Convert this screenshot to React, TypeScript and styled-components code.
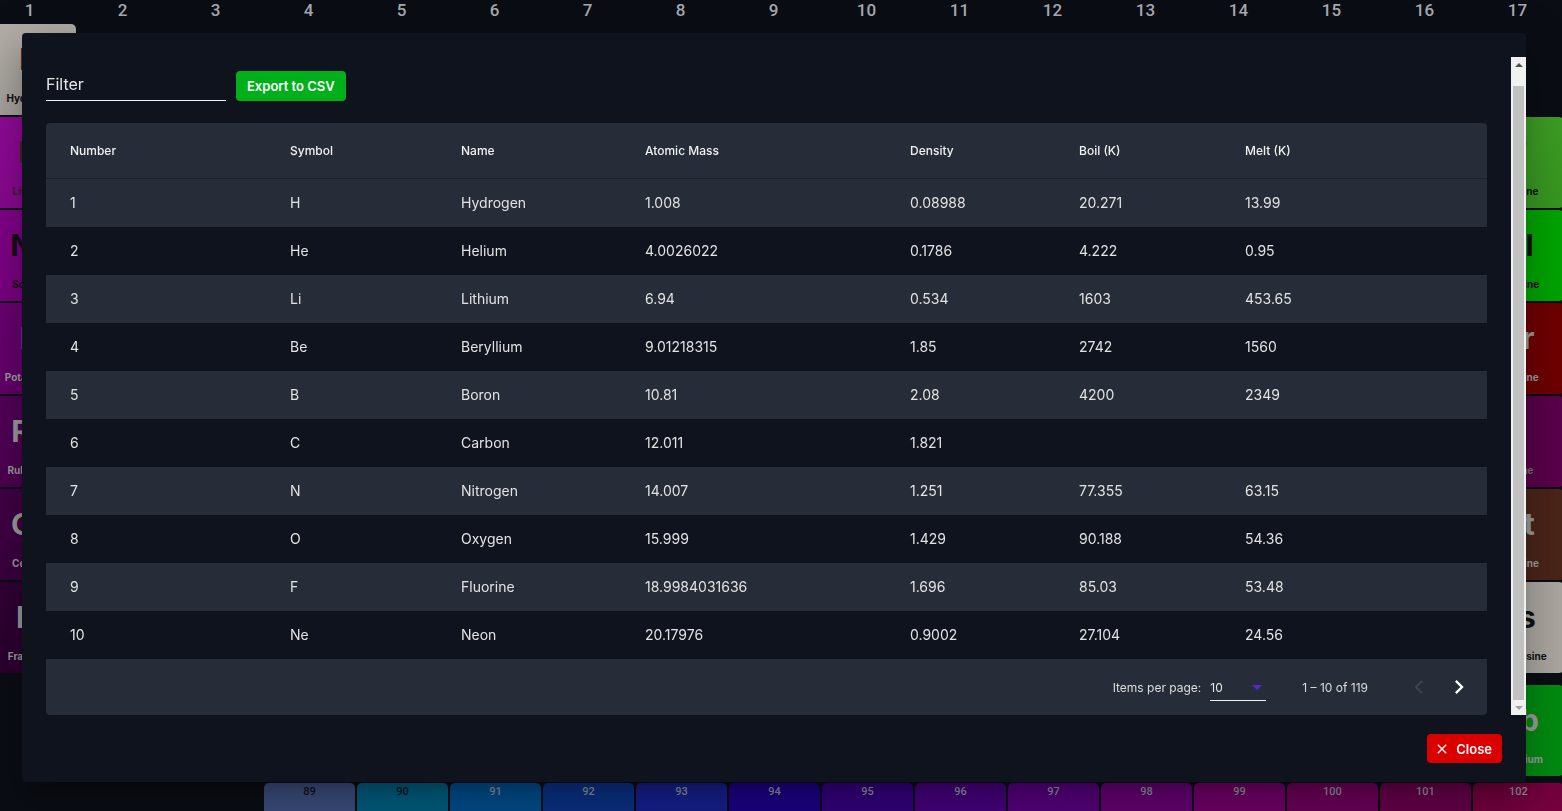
import React, { useLayoutEffect, useRef } from "react";
import styled, { createGlobalStyle } from "styled-components";

const GlobalStyle = createGlobalStyle`
  html, body {
    margin: 0;
    padding: 0;
    background: #0a0d14;
    overflow: hidden;
  }
  body {
    font-family: Inter, "Open Sans", "Noto Sans", sans-serif;
  }
  * { box-sizing: border-box; }
`;

type Element = {
  n: number;
  s: string;
  name: string;
  col: number;
  row: number;
  bg: string;
  fg: string;
};

const elements: Element[] = [
  { n: 1, s: "H", name: "Hydrogen", col: 1, row: 2, bg: "linear-gradient(160deg,#b3aea8,#a29d97)", fg: "#111" },
  { n: 3, s: "Li", name: "Lithium", col: 1, row: 3, bg: "linear-gradient(160deg,#900a98,#85078d)", fg: "#2a2a2a" },
  { n: 11, s: "Na", name: "Sodium", col: 1, row: 4, bg: "linear-gradient(160deg,#82008a,#76007e)", fg: "#111" },
  { n: 19, s: "K", name: "Potassium", col: 1, row: 5, bg: "linear-gradient(160deg,#6b0072,#5f0066)", fg: "#9a9a9a" },
  { n: 37, s: "Rb", name: "Rubidium", col: 1, row: 6, bg: "linear-gradient(160deg,#540059,#4a004f)", fg: "#9a9a9a" },
  { n: 55, s: "Cs", name: "Cesium", col: 1, row: 7, bg: "linear-gradient(160deg,#420046,#38003c)", fg: "#9a9a9a" },
  { n: 87, s: "Fr", name: "Francium", col: 1, row: 8, bg: "linear-gradient(160deg,#310035,#28002c)", fg: "#9a9a9a" },
  { n: 9, s: "F", name: "Fluorine", col: 17, row: 3, bg: "linear-gradient(160deg,#3f9e28,#36961f)", fg: "#111" },
  { n: 17, s: "Cl", name: "Chlorine", col: 17, row: 4, bg: "#00a300", fg: "#111" },
  { n: 35, s: "Br", name: "Bromine", col: 17, row: 5, bg: "#6e0000", fg: "#9a9a9a" },
  { n: 53, s: "I", name: "Iodine", col: 17, row: 6, bg: "#5a004a", fg: "#7a6a78" },
  { n: 85, s: "At", name: "Astatine", col: 17, row: 7, bg: "#4a2418", fg: "#9a9a9a" },
  { n: 117, s: "Ts", name: "Tennessine", col: 17, row: 8, bg: "#aaa59f", fg: "#111" },
  { n: 70, s: "Yb", name: "Ytterbium", col: 17, row: 10, bg: "#008a12", fg: "#9a9a9a" },
  { n: 89, s: "Ac", name: "Actinium", col: 4, row: 12, bg: "#3b4c7b", fg: "#111" },
  { n: 90, s: "Th", name: "Thorium", col: 5, row: 12, bg: "#005b7d", fg: "#111" },
  { n: 91, s: "Pa", name: "Protactinium", col: 6, row: 12, bg: "#004b89", fg: "#8a909a" },
  { n: 92, s: "U", name: "Uranium", col: 7, row: 12, bg: "#0a3082", fg: "#8a909a" },
  { n: 93, s: "Np", name: "Neptunium", col: 8, row: 12, bg: "#151f89", fg: "#8a909a" },
  { n: 94, s: "Pu", name: "Plutonium", col: 9, row: 12, bg: "#1b0082", fg: "#8a909a" },
  { n: 95, s: "Am", name: "Americium", col: 10, row: 12, bg: "#32007a", fg: "#8a909a" },
  { n: 96, s: "Cm", name: "Curium", col: 11, row: 12, bg: "#44007a", fg: "#8a909a" },
  { n: 97, s: "Bk", name: "Berkelium", col: 12, row: 12, bg: "#54007a", fg: "#8a909a" },
  { n: 98, s: "Cf", name: "Californium", col: 13, row: 12, bg: "#630070", fg: "#8a909a" },
  { n: 99, s: "Es", name: "Einsteinium", col: 14, row: 12, bg: "#6e0066", fg: "#8a909a" },
  { n: 100, s: "Fm", name: "Fermium", col: 15, row: 12, bg: "#6a0058", fg: "#8a909a" },
  { n: 101, s: "Md", name: "Mendelevium", col: 16, row: 12, bg: "#640048", fg: "#8a909a" },
  { n: 102, s: "No", name: "Nobelium", col: 17, row: 12, bg: "linear-gradient(160deg,#6e003a,#800044)", fg: "#8a909a" },
];

const rows = [
  ["1", "H", "Hydrogen", "1.008", "0.08988", "20.271", "13.99"],
  ["2", "He", "Helium", "4.0026022", "0.1786", "4.222", "0.95"],
  ["3", "Li", "Lithium", "6.94", "0.534", "1603", "453.65"],
  ["4", "Be", "Beryllium", "9.01218315", "1.85", "2742", "1560"],
  ["5", "B", "Boron", "10.81", "2.08", "4200", "2349"],
  ["6", "C", "Carbon", "12.011", "1.821", "", ""],
  ["7", "N", "Nitrogen", "14.007", "1.251", "77.355", "63.15"],
  ["8", "O", "Oxygen", "15.999", "1.429", "90.188", "54.36"],
  ["9", "F", "Fluorine", "18.9984031636", "1.696", "85.03", "53.48"],
  ["10", "Ne", "Neon", "20.17976", "0.9002", "27.104", "24.56"],
];

const headers = ["Number", "Symbol", "Name", "Atomic Mass", "Density", "Boil (K)", "Melt (K)"];

/* ---------- background periodic table ---------- */

const Table = styled.div`
  display: grid;
  grid-template-columns: repeat(18, 91px);
  grid-template-rows: 22px repeat(7, 91px) 8px 91px 3px 91px;
  gap: 2px;
  margin-left: -15px;
  width: 1672px;
`;

const GroupLabel = styled.div<{ $col: number }>`
  grid-row: 1;
  grid-column: ${(p) => p.$col};
  display: flex;
  align-items: center;
  justify-content: center;
  padding: 0 2px 2px 0;
  font-family: Roboto, "DejaVu Sans", sans-serif;
  font-weight: 500;
  font-size: 17px;
  color: #a7aab1;
`;

const ElementCell = styled.div<{ $col: number; $row: number; $bg: string; $fg: string }>`
  grid-column: ${(p) => p.$col};
  grid-row: ${(p) => p.$row};
  background: ${(p) => p.$bg};
  color: ${(p) => p.$fg};
  border-radius: 5px;
  display: flex;
  flex-direction: column;
  align-items: center;
  padding: 2px 2px 10px;
  overflow: hidden;
  white-space: nowrap;
`;

const ElementNumber = styled.span`
  font-family: Roboto, "DejaVu Sans", sans-serif;
  font-size: 11px;
  font-weight: 500;
  line-height: 14px;
`;

const ElementSymbol = styled.span`
  flex: 1;
  display: flex;
  align-items: center;
  font-size: 30px;
  font-weight: 700;
`;

const ElementName = styled.span`
  font-size: 10px;
  font-weight: 700;
  line-height: 14px;
`;

/* ---------- dialog ---------- */

const Overlay = styled.div`
  position: fixed;
  inset: 0;
  z-index: 10;
  display: flex;
  align-items: flex-start;
  padding: 33px 0 0 22px;
`;

const Dialog = styled.div`
  width: 1504px;
  height: 749px;
  background: #0e131d;
  border-radius: 4px;
  box-shadow: 0 11px 15px -7px rgba(0, 0, 0, 0.2), 0 24px 38px 3px rgba(0, 0, 0, 0.14),
    0 9px 46px 8px rgba(0, 0, 0, 0.12);
  display: flex;
  flex-direction: column;
  padding: 24px 0 19px;
`;

const DialogBody = styled.div`
  height: 658px;
  display: flex;
`;

const ScrollArea = styled.div`
  flex: 1;
  min-width: 0;
  overflow: hidden;
  padding: 0 24px;
`;

const Scrollbar = styled.div`
  width: 15px;
  background: #f1f1f1;
  display: flex;
  flex-direction: column;
`;

const ScrollArrow = styled.div<{ $dir: "up" | "down"; $active: boolean }>`
  height: 15px;
  display: flex;
  align-items: center;
  justify-content: center;
  &::before {
    content: "";
    width: 0;
    height: 0;
    border-left: 4px solid transparent;
    border-right: 4px solid transparent;
    ${(p) =>
      p.$dir === "up"
        ? `border-bottom: 4px solid ${p.$active ? "#505050" : "#a3a3a3"};`
        : `border-top: 4px solid ${p.$active ? "#505050" : "#a3a3a3"};`}
  }
`;

const ScrollTrack = styled.div`
  flex: 1;
  display: flex;
  flex-direction: column;
  justify-content: flex-end;
  padding: 0 2px;
`;

const ScrollThumb = styled.div`
  height: 614px;
  background: #c1c1c1;
`;

const Toolbar = styled.div`
  height: 59px;
  display: flex;
  align-items: flex-end;
  gap: 10px;
  margin-bottom: 22px;
`;

const FilterInput = styled.input`
  width: 180px;
  border: none;
  border-bottom: 1px solid #f2f2f2;
  background: transparent;
  color: #e8e8e8;
  font-family: inherit;
  font-size: 16px;
  line-height: 20px;
  height: 27px;
  padding: 0 0 6px;
  outline: none;
  &::placeholder {
    color: #e6e6e6;
    opacity: 1;
  }
`;

const ExportButton = styled.button`
  height: 30px;
  padding: 0 11px;
  border: none;
  border-radius: 4px;
  background: #00b01a;
  color: #fff;
  font-family: inherit;
  font-size: 13px;
  font-weight: 600;
  cursor: pointer;
`;

const Card = styled.div`
  background: #262d38;
  border-radius: 4px;
  overflow: hidden;
`;

const columns = "244px 171px 184px 265px 169px 166px 1fr";

const HeaderRow = styled.div`
  display: grid;
  grid-template-columns: ${columns};
  height: 56px;
  align-items: center;
  border-bottom: 1px solid #1c222b;
  font-size: 12px;
  font-weight: 500;
  color: #f0f0f0;
`;

const BodyRow = styled.div<{ $striped: boolean }>`
  display: grid;
  grid-template-columns: ${columns};
  height: 48px;
  align-items: center;
  padding-bottom: 2px;
  background: ${(p) => (p.$striped ? "#262d38" : "#0e131d")};
  font-size: 14px;
  color: #e2e2e2;
`;

const TableCell = styled.div`
  white-space: nowrap;
  &:first-child {
    padding-left: 24px;
  }
`;

const Paginator = styled.div`
  height: 56px;
  display: flex;
  align-items: center;
  justify-content: flex-end;
  padding-right: 8px;
  font-size: 12px;
  color: #dcdcdc;
`;

const PageSizeLabel = styled.span`
  margin-right: 9px;
`;

const PageSizeSelect = styled.div`
  width: 56px;
  height: 27px;
  display: flex;
  align-items: center;
  justify-content: space-between;
  padding: 1px 4px 0 0;
  border-bottom: 1px solid #f0f0f0;
  margin-right: 36px;
  font-size: 12px;
  color: #e8e8e8;
`;

const SelectArrow = styled.span`
  width: 0;
  height: 0;
  border-left: 5px solid transparent;
  border-right: 5px solid transparent;
  border-top: 5px solid #5a24d2;
`;

const RangeLabel = styled.span`
  margin-right: 31px;
`;

const PageButton = styled.button<{ $disabled?: boolean }>`
  width: 40px;
  height: 40px;
  border: none;
  background: transparent;
  padding: 0;
  display: flex;
  align-items: center;
  justify-content: center;
  color: ${(p) => (p.$disabled ? "#3b424d" : "#ffffff")};
  cursor: ${(p) => (p.$disabled ? "default" : "pointer")};
`;

const Actions = styled.div`
  margin-top: 19px;
  padding: 0 24px;
  display: flex;
  justify-content: flex-end;
`;

const CloseButton = styled.button`
  height: 29px;
  padding: 0 10px 0 7px;
  border: none;
  border-radius: 4px;
  background: #db0000;
  color: #fff;
  display: flex;
  align-items: center;
  gap: 6px;
  font-family: inherit;
  font-size: 13px;
  font-weight: 600;
  cursor: pointer;
`;

const Chevron = ({ dir }: { dir: "prev" | "next" }) => (
  <svg width="28" height="28" viewBox="0 0 24 24" fill="currentColor">
    {dir === "prev" ? (
      <path d="M15.41 7.41L14 6l-6 6 6 6 1.41-1.41L10.83 12z" />
    ) : (
      <path d="M10 6L8.59 7.41 13.17 12l-4.58 4.59L10 18l6-6z" />
    )}
  </svg>
);

const CloseIcon = () => (
  <svg width="16" height="16" viewBox="0 0 24 24" fill="currentColor">
    <path d="M19 6.41L17.59 5 12 10.59 6.41 5 5 6.41 10.59 12 5 17.59 6.41 19 12 13.41 17.59 19 19 17.59 13.41 12z" />
  </svg>
);

export default function App() {
  const scrollRef = useRef<HTMLDivElement>(null);
  useLayoutEffect(() => {
    const el = scrollRef.current;
    if (el) el.scrollTop = el.scrollHeight;
  }, []);

  return (
    <>
      <GlobalStyle />
      <Table>
        {Array.from({ length: 18 }, (_, i) => (
          <GroupLabel key={i} $col={i + 1}>
            {i + 1}
          </GroupLabel>
        ))}
        {elements.map((e) => (
          <ElementCell key={e.n} $col={e.col} $row={e.row} $bg={e.bg} $fg={e.fg}>
            <ElementNumber>{e.row === 12 ? e.n : ""}</ElementNumber>
            <ElementSymbol>{e.s}</ElementSymbol>
            <ElementName>{e.name}</ElementName>
          </ElementCell>
        ))}
      </Table>

      <Overlay>
        <Dialog>
          <DialogBody>
            <ScrollArea ref={scrollRef}>
              <Toolbar>
                <FilterInput placeholder="Filter" />
                <ExportButton>Export to CSV</ExportButton>
              </Toolbar>
              <Card>
                <HeaderRow>
                  {headers.map((h) => (
                    <TableCell key={h}>{h}</TableCell>
                  ))}
                </HeaderRow>
                {rows.map((r, i) => (
                  <BodyRow key={r[0]} $striped={i % 2 === 0}>
                    {r.map((c, j) => (
                      <TableCell key={j}>{c}</TableCell>
                    ))}
                  </BodyRow>
                ))}
                <Paginator>
                  <PageSizeLabel>Items per page:</PageSizeLabel>
                  <PageSizeSelect>
                    <span>10</span>
                    <SelectArrow />
                  </PageSizeSelect>
                  <RangeLabel>1 – 10 of 119</RangeLabel>
                  <PageButton $disabled aria-label="Previous page">
                    <Chevron dir="prev" />
                  </PageButton>
                  <PageButton aria-label="Next page">
                    <Chevron dir="next" />
                  </PageButton>
                </Paginator>
              </Card>
            </ScrollArea>
            <Scrollbar>
              <ScrollArrow $dir="up" $active />
              <ScrollTrack>
                <ScrollThumb />
              </ScrollTrack>
              <ScrollArrow $dir="down" $active={false} />
            </Scrollbar>
          </DialogBody>
          <Actions>
            <CloseButton>
              <CloseIcon />
              Close
            </CloseButton>
          </Actions>
        </Dialog>
      </Overlay>
    </>
  );
}
